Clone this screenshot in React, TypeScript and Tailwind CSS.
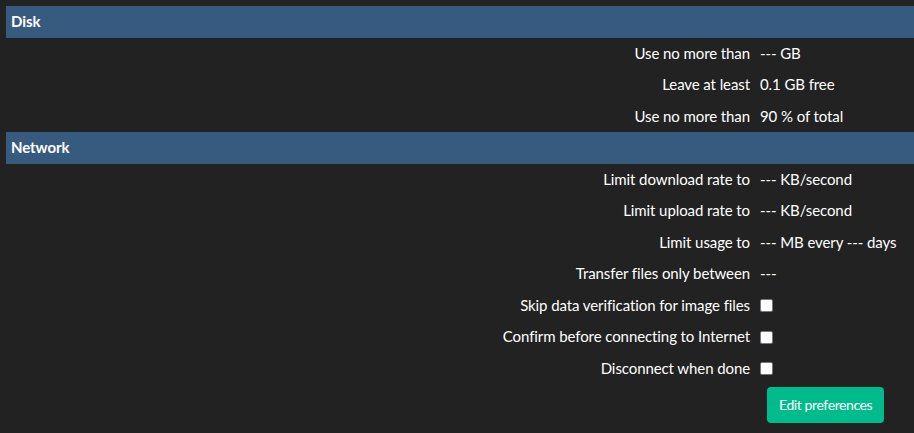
const disk = [
  ['Use no more than', '--- GB'],
  ['Leave at least', '0.1 GB free'],
  ['Use no more than', '90 % of total'],
];

const network = [
  ['Limit download rate to', '--- KB/second'],
  ['Limit upload rate to', '--- KB/second'],
  ['Limit usage to', '--- MB every --- days'],
  ['Transfer files only between', '---'],
];

const checks = [
  'Skip data verification for image files',
  'Confirm before connecting to Internet',
  'Disconnect when done',
];

function Header({ title }: { title: string }) {
  return (
    <div className="col-span-2 bg-[#375a7f] px-[5px] py-[5px] font-bold leading-[21.5px]">
      {title}
    </div>
  );
}

function Row({ label, children }: { label: string; children: React.ReactNode }) {
  return (
    <>
      <div className="text-right px-[5px] py-[5px] leading-[21.5px]">{label}</div>
      <div className="flex items-center px-[5px] py-[5px] leading-[21.5px]">{children}</div>
    </>
  );
}

function Checkbox() {
  return <span className="inline-block w-[13px] h-[13px] bg-white border border-[#767682] rounded-[2px] mt-[1px]" />;
}

export default function App() {
  return (
    <div
      className="min-h-[433px] bg-[#222222] text-white text-[15px] tracking-[-0.09px] pl-[6px] pt-[6px]"
      style={{ fontFamily: 'Lato, "Open Sans", sans-serif' }}
    >
      <div className="grid grid-cols-[749px_1fr]">
        <Header title="Disk" />
        {disk.map(([l, v], i) => (
          <Row key={i} label={l}>{v}</Row>
        ))}
        <Header title="Network" />
        {network.map(([l, v], i) => (
          <Row key={i} label={l}>{v}</Row>
        ))}
        {checks.map((l) => (
          <Row key={l} label={l}>
            <Checkbox />
          </Row>
        ))}
        <div />
        <div className="px-[5px] pt-[3px]">
          <button className="ml-[7px] h-[36px] px-[12px] rounded-[4px] bg-[#00bc8c] text-white text-[14px] tracking-[-0.4px] leading-none">
            Edit preferences
          </button>
        </div>
      </div>
    </div>
  );
}
